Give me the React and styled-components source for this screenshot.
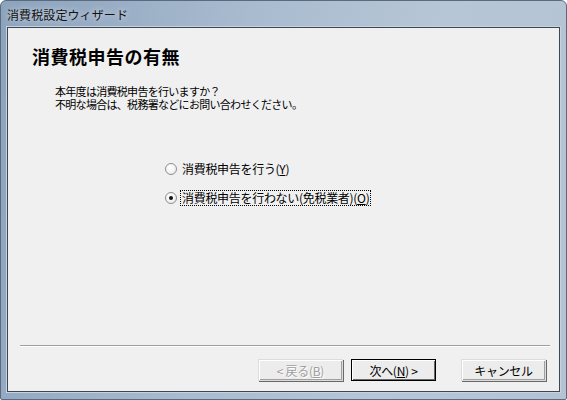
import React from "react";
import styled, { createGlobalStyle } from "styled-components";

const GlobalStyle = createGlobalStyle`
  html, body {
    margin: 0;
    padding: 0;
    width: 567px;
    height: 400px;
    overflow: hidden;
    background: #ffffff;
  }
  * {
    box-sizing: border-box;
  }
`;

const Frame = styled.div`
  width: 567px;
  height: 400px;
  display: flex;
  flex-direction: column;
  border: 1px solid #5b6b7d;
  border-radius: 6px 6px 2px 2px;
  background: linear-gradient(100deg, #8ca3bd 0%, #a9bbcf 40%, #b6c6d6 70%, #b3c3d4 100%);
  padding: 0 6px 7px 6px;
  font-family: "Noto Sans CJK JP", "Liberation Sans", sans-serif;
`;

const TitleBar = styled.div`
  height: 26px;
  display: flex;
  align-items: center;
  font-size: 12px;
  color: #111;
  text-shadow: 0 0 6px rgba(255, 255, 255, 0.8);
  letter-spacing: 0.1px;
`;

const Client = styled.div`
  flex: 1;
  display: flex;
  flex-direction: column;
  background: #f0f0f0;
  border: 1px solid #3d4754;
  box-shadow: 0 0 0 1px #c6d3e0;
  padding: 17px 9px 10px 12px;
`;

const Heading = styled.h1`
  margin: 0 0 0 12px;
  font-size: 18px;
  font-weight: bold;
  line-height: 22px;
  color: #000;
  letter-spacing: 0.5px;
`;

const Description = styled.p`
  margin: 18px 0 0 35px;
  font-size: 11px;
  line-height: 13px;
  letter-spacing: -0.7px;
  color: #000;
`;

const RadioGroup = styled.div`
  margin: 50px 0 0 145px;
  display: flex;
  flex-direction: column;
  gap: 13px;
`;

const RadioRow = styled.label`
  display: flex;
  align-items: center;
  height: 16px;
  font-size: 12px;
  color: #000;
`;

const RadioCircle = styled.span`
  width: 12px;
  height: 12px;
  border-radius: 50%;
  border: 1px solid #8e8f8f;
  background: radial-gradient(circle at 40% 35%, #ffffff 0%, #f2f2f2 60%, #d8d8d8 100%);
  display: flex;
  align-items: center;
  justify-content: center;
  margin-right: 4px;

  &::after {
    content: "";
    width: 4px;
    height: 4px;
    border-radius: 50%;
    background: ${(p) => (p.$checked ? "#111" : "transparent")};
  }
`;

const RadioLabel = styled.span`
  padding: 0 1px;
  line-height: 14px;
  letter-spacing: -0.3px;
  outline: ${(p) => (p.$focused ? "1px dotted #000" : "none")};
`;

const Key = styled.u`
  text-decoration: underline;
`;

const Spacer = styled.div`
  flex: 1;
`;

const Separator = styled.hr`
  margin: 0 0 12px 0;
  height: 2px;
  border: none;
  border-top: 1px solid #a0a0a0;
  border-bottom: 1px solid #ffffff;
`;

const ButtonRow = styled.div`
  display: flex;
  justify-content: flex-end;
  padding-right: 4px;
`;

const Button = styled.button`
  width: 85px;
  height: 22px;
  margin-left: ${(p) => p.$gap || 0}px;
  font-family: "Noto Sans CJK JP", "Liberation Sans", sans-serif;
  font-size: 12px;
  letter-spacing: -0.3px;
  background: #ececec;
  color: ${(p) => (p.disabled ? "#a0a0a0" : "#000")};
  border: 1px solid ${(p) => (p.$default ? "#000" : "#dcdcdc")};
  box-shadow: ${(p) =>
    p.$default
      ? "inset 1px 1px 0 #fff, inset -1px -1px 0 #696969"
      : "inset 1px 1px 0 #fff, inset -1px -1px 0 #a0a0a0, 1px 1px 0 #696969"};
  padding: 0;
  text-shadow: ${(p) => (p.disabled ? "1px 1px 0 #fff" : "none")};
`;

export default function App() {
  return (
    <>
      <GlobalStyle />
      <Frame>
        <TitleBar>消費税設定ウィザード</TitleBar>
        <Client>
          <Heading>消費税申告の有無</Heading>
          <Description>
            本年度は消費税申告を行いますか？
            <br />
            不明な場合は、税務署などにお問い合わせください。
          </Description>
          <RadioGroup>
            <RadioRow>
              <RadioCircle />
              <RadioLabel>
                消費税申告を行う(<Key>Y</Key>)
              </RadioLabel>
            </RadioRow>
            <RadioRow>
              <RadioCircle $checked />
              <RadioLabel $focused>
                消費税申告を行わない(免税業者)(<Key>O</Key>)
              </RadioLabel>
            </RadioRow>
          </RadioGroup>
          <Spacer />
          <Separator />
          <ButtonRow>
            <Button disabled>
              &lt; 戻る(<Key>B</Key>)
            </Button>
            <Button $default $gap={8}>
              次へ(<Key>N</Key>) &gt;
            </Button>
            <Button $gap={25}>キャンセル</Button>
          </ButtonRow>
        </Client>
      </Frame>
    </>
  );
}
